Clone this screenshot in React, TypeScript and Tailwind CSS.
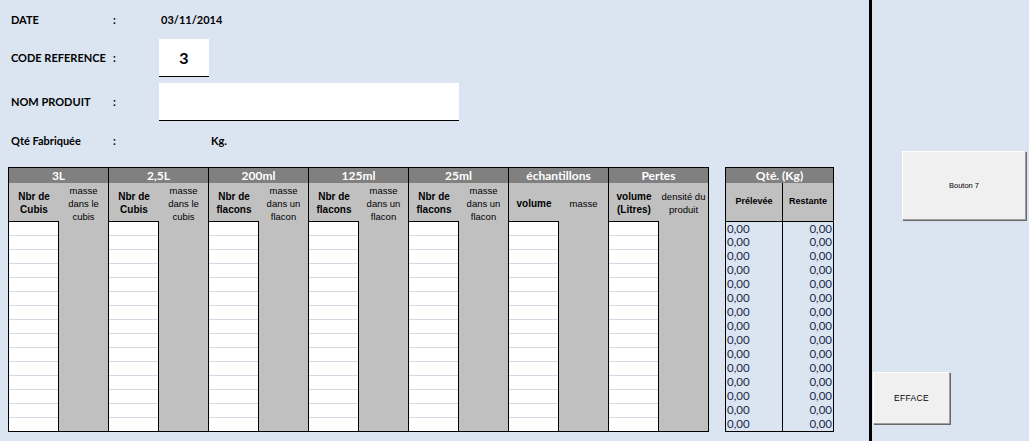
const lato = "font-['Lato','Liberation_Sans',sans-serif]";
const arial = "font-['Liberation_Sans',Arial,sans-serif]";

type Group = { title: string; left: string[]; right: string[] };

const groups: Group[] = [
  { title: "3L", left: ["Nbr de", "Cubis"], right: ["masse", "dans le", "cubis"] },
  { title: "2,5L", left: ["Nbr de", "Cubis"], right: ["masse", "dans le", "cubis"] },
  { title: "200ml", left: ["Nbr de", "flacons"], right: ["masse", "dans un", "flacon"] },
  { title: "125ml", left: ["Nbr de", "flacons"], right: ["masse", "dans un", "flacon"] },
  { title: "25ml", left: ["Nbr de", "flacons"], right: ["masse", "dans un", "flacon"] },
  { title: "échantillons", left: ["volume"], right: ["masse"] },
  { title: "Pertes", left: ["volume", "(Litres)"], right: ["densité du", "produit"] },
];

const rows = Array.from({ length: 15 }, (_, i) => i);

function Lines({ items }: { items: string[] }) {
  return (
    <div>
      {items.map((t) => (
        <div key={t} className="whitespace-nowrap">
          {t}
        </div>
      ))}
    </div>
  );
}

function TableGroup({ group }: { group: Group }) {
  return (
    <div className="flex w-[100px] flex-col border-r border-black">
      <div className={`flex h-[15px] items-center justify-center bg-[#808080] text-[12px] font-bold text-white ${lato}`}>
        {group.title}
      </div>
      <div className={`flex h-[38px] bg-[#c0c0c0] text-black ${arial}`}>
        <div className="flex w-[50px] items-center justify-center pt-[2px] text-center text-[10px] font-bold leading-[13px]">
          <Lines items={group.left} />
        </div>
        <div className="flex flex-1 items-center justify-center pt-[2px] text-center text-[9.5px] leading-[13px]">
          <Lines items={group.right} />
        </div>
      </div>
      <div className="flex flex-1">
        <div className="w-[50px] border-r border-t border-black bg-white">
          {rows.map((r) =>
            r === 0 ? (
              <div key={r} className="h-[13px]" />
            ) : (
              <div key={r} className="h-[14px] border-t border-[#d3dae3]" />
            )
          )}
        </div>
        <div className="flex-1 bg-[#c0c0c0]" />
      </div>
    </div>
  );
}

function QtyTable() {
  return (
    <div className="ml-[16px] flex w-[109px] flex-col border border-black">
      <div className={`flex h-[15px] items-center justify-center bg-[#808080] text-[12px] font-bold text-white ${lato}`}>
        Qté. (Kg)
      </div>
      <div className={`flex h-[38px] bg-[#c0c0c0] text-[9px] font-bold text-black ${arial}`}>
        <div className="flex w-[57px] items-center justify-center border-r border-black">Prélevée</div>
        <div className="flex flex-1 items-center justify-center">Restante</div>
      </div>
      <div className={`flex flex-1 border-t border-black text-[11.5px] text-[#1c2a4a] ${lato}`}>
        <div className="w-[57px] border-r border-black">
          {rows.map((r) => (
            <div key={r} className={`${r === 0 ? "h-[13px]" : "h-[14px]"} flex items-center pl-[1px] leading-none`}>
              0,00
            </div>
          ))}
        </div>
        <div className="flex-1">
          {rows.map((r) => (
            <div key={r} className={`${r === 0 ? "h-[13px]" : "h-[14px]"} flex items-center justify-end pr-[1px] leading-none`}>
              0,00
            </div>
          ))}
        </div>
      </div>
    </div>
  );
}

function FormRow({ label, children, className }: { label: string; children?: React.ReactNode; className: string }) {
  return (
    <div className={`flex items-center pl-[11px] text-[11px] font-bold text-black ${lato} ${className}`}>
      <div className="w-[102px] whitespace-nowrap">{label}</div>
      <div className="w-[46px]">:</div>
      {children}
    </div>
  );
}

const buttonCls =
  "flex items-center justify-center border border-white border-r-[#a0a0a0] border-b-[#a0a0a0] bg-[#f0f0f0] text-black shadow-[1px_1px_0_0_#696969]";

export default function App() {
  return (
    <div className="flex h-[441px] w-[1029px] overflow-hidden bg-[#dbe5f1]">
      <div className="flex w-[869px] flex-col">
        <FormRow label="DATE" className="mt-[10px] h-[20px]">
          <div className="pl-[2px]">03/11/2014</div>
        </FormRow>
        <FormRow label="CODE REFERENCE" className="mt-[9px] h-[38px]">
          <div className="flex h-[38px] w-[50px] items-center justify-center border-b border-black bg-white text-[16px]">
            3
          </div>
        </FormRow>
        <FormRow label="NOM PRODUIT" className="mt-[6px] h-[38px]">
          <div className="h-[38px] w-[300px] border-b border-black bg-white" />
        </FormRow>
        <FormRow label="Qté Fabriquée" className="mt-[10px] h-[20px]">
          <div className="pl-[52px]">Kg.</div>
        </FormRow>

        <div className="mt-[16px] flex pl-[8px]">
          <div className="flex h-[265px] border-y border-l border-black">
            {groups.map((g) => (
              <TableGroup key={g.title} group={g} />
            ))}
          </div>
          <QtyTable />
        </div>
      </div>

      <div className="w-[3px] bg-black" />

      <div className="flex flex-1 flex-col">
        <button className={`ml-[30px] mt-[151px] h-[69px] w-[124px] text-[7.5px] ${arial} ${buttonCls}`}>
          Bouton 7
        </button>
        <button className={`ml-[1px] mt-[152px] h-[52px] w-[77px] text-[8.5px] tracking-[0.3px] ${arial} ${buttonCls}`}>
          EFFACE
        </button>
      </div>
    </div>
  );
}
